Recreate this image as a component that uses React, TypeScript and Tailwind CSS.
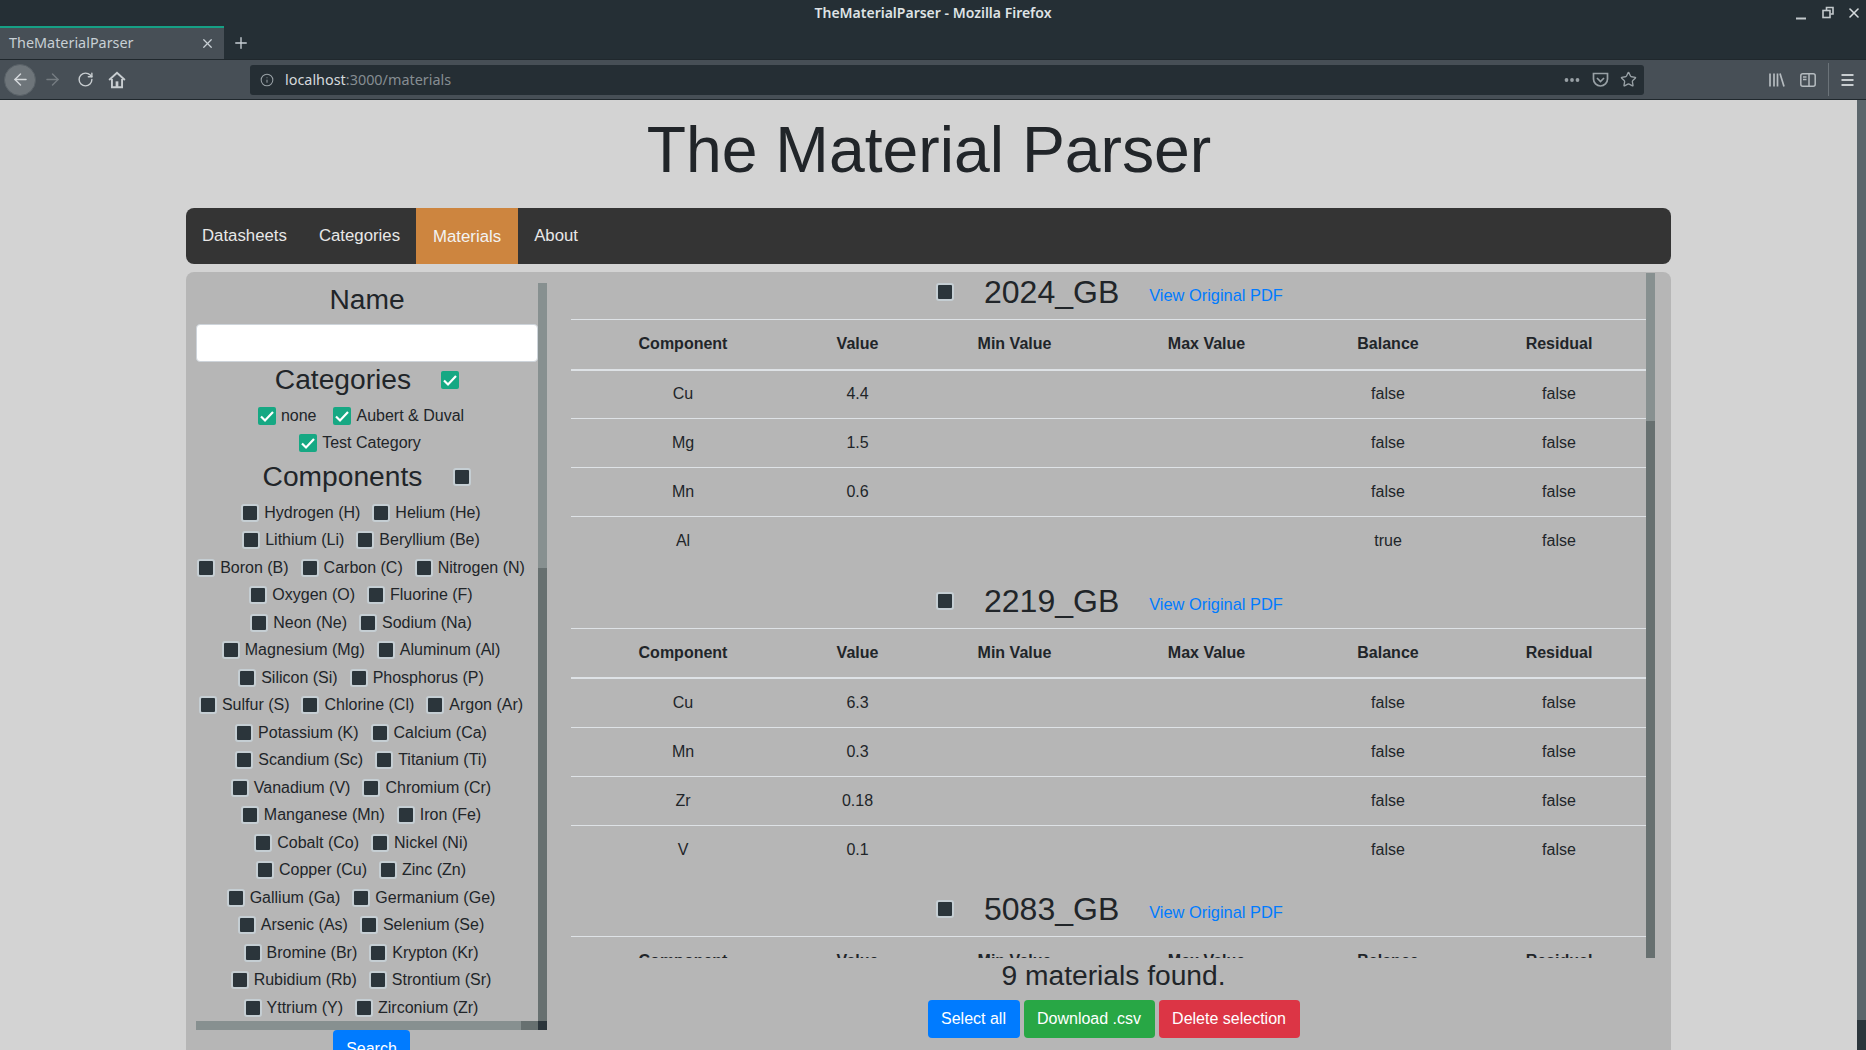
import { Info, Star, X, Plus, ArrowLeft, ArrowRight, RotateCw } from 'lucide-react'

const sans = { fontFamily: '"Liberation Sans", Arial, sans-serif' }

const elementRows = [
  ['Hydrogen (H)', 'Helium (He)'],
  ['Lithium (Li)', 'Beryllium (Be)'],
  ['Boron (B)', 'Carbon (C)', 'Nitrogen (N)'],
  ['Oxygen (O)', 'Fluorine (F)'],
  ['Neon (Ne)', 'Sodium (Na)'],
  ['Magnesium (Mg)', 'Aluminum (Al)'],
  ['Silicon (Si)', 'Phosphorus (P)'],
  ['Sulfur (S)', 'Chlorine (Cl)', 'Argon (Ar)'],
  ['Potassium (K)', 'Calcium (Ca)'],
  ['Scandium (Sc)', 'Titanium (Ti)'],
  ['Vanadium (V)', 'Chromium (Cr)'],
  ['Manganese (Mn)', 'Iron (Fe)'],
  ['Cobalt (Co)', 'Nickel (Ni)'],
  ['Copper (Cu)', 'Zinc (Zn)'],
  ['Gallium (Ga)', 'Germanium (Ge)'],
  ['Arsenic (As)', 'Selenium (Se)'],
  ['Bromine (Br)', 'Krypton (Kr)'],
  ['Rubidium (Rb)', 'Strontium (Sr)'],
  ['Yttrium (Y)', 'Zirconium (Zr)'],
]

const materials = [
  {
    name: '2024_GB',
    rows: [
      ['Cu', '4.4', 'false'],
      ['Mg', '1.5', 'false'],
      ['Mn', '0.6', 'false'],
      ['Al', '', 'true'],
    ],
  },
  {
    name: '2219_GB',
    rows: [
      ['Cu', '6.3', 'false'],
      ['Mn', '0.3', 'false'],
      ['Zr', '0.18', 'false'],
      ['V', '0.1', 'false'],
    ],
  },
  { name: '5083_GB', rows: [['Mg', '4.5', 'false']] },
]

function Checkbox({ checked }: { checked?: boolean }) {
  if (checked) {
    return (
      <span className="flex h-[18px] w-[18px] shrink-0 items-center justify-center rounded-[2px] bg-[#16a883]">
        <svg width="18" height="18" viewBox="0 0 18 18" fill="none">
          <path d="M3 9.5 L7 13.5 L15 5" stroke="white" strokeWidth="2.2" />
        </svg>
      </span>
    )
  }
  return <span className="h-[18px] w-[18px] shrink-0 rounded-[3px] border-2 border-[#c5ced3] bg-[#2b353b]" />
}

function CheckItem({ label, checked }: { label: string; checked?: boolean }) {
  return (
    <div className={checked ? 'mr-[17px] flex items-center gap-[5px]' : 'mr-[12px] flex items-center gap-[5px]'}>
      <Checkbox checked={checked} />
      <span>{label}</span>
    </div>
  )
}

function TitleBar() {
  return (
    <div className="relative flex h-[26px] items-center justify-center bg-[#252f35] pb-[2px]">
      <span className="text-[14px] font-semibold text-[#dfe3e5]">TheMaterialParser - Mozilla Firefox</span>
      <div className="absolute top-0 right-[4px] flex h-[26px] items-center gap-[10px]">
        <svg width="16" height="16" viewBox="0 0 16 16" className="text-[#c3c9cc]">
          <path d="M2 13.5 H12" stroke="currentColor" strokeWidth="2" />
        </svg>
        <svg width="16" height="16" viewBox="0 0 16 16" fill="none" stroke="currentColor" strokeWidth="1.6" className="text-[#c3c9cc]">
          <path d="M6.5 5 V2.5 H13 V9 H10.5" />
          <rect x="3" y="5.5" width="7" height="7" />
        </svg>
        <X size={16} strokeWidth={2.4} className="text-[#d5dadc]" />
      </div>
    </div>
  )
}

function TabBar() {
  return (
    <div className="flex h-[33px] items-stretch bg-[#252f35]">
      <div className="flex w-[224px] items-center justify-between border-t-[2px] border-[#16a085] bg-[#474f56] pr-[9px] pb-[1px] pl-[9px]">
        <span className="text-[14.4px] text-[#c8d0d5]">TheMaterialParser</span>
        <X size={15} strokeWidth={2} className="text-[#c8d0d5]" />
      </div>
      <div className="flex w-[34px] items-center justify-center">
        <Plus size={18} strokeWidth={1.8} className="text-[#c8d0d5]" />
      </div>
    </div>
  )
}

function Toolbar() {
  return (
    <div className="flex h-[41px] items-center border-t border-b border-[#20282d] bg-[#474f56]">
      <div className="ml-[4px] flex h-[32px] w-[32px] shrink-0 items-center justify-center rounded-full border border-[#596167] bg-[#6e757a]">
        <ArrowLeft size={19} strokeWidth={1.8} className="text-[#d5d9dc]" />
      </div>
      <ArrowRight size={19} strokeWidth={1.8} className="ml-[7px] shrink-0 text-[#757c81]" />
      <RotateCw size={17} strokeWidth={2} className="ml-[15px] shrink-0 text-[#c8cdd0]" />
      <svg width="18" height="18" viewBox="0 0 16 16" fill="none" stroke="#c8cdd0" strokeWidth="1.7" className="ml-[14px] shrink-0">
        <path d="M1 8 L8 1.5 L15 8" />
        <path d="M3.5 7 V14.5 H12.5 V7" />
        <rect x="6.8" y="9.2" width="2.4" height="5" fill="#c8cdd0" stroke="none" />
      </svg>
      <div className="ml-[124px] flex h-[30px] w-[1394px] shrink-0 items-center rounded-[3px] bg-[#252e34]">
        <Info size={14} strokeWidth={1.8} className="ml-[10px] text-[#98a0a5]" />
        <span className="ml-[11px] text-[14.4px] text-[#d5d9dc]">localhost</span>
        <span className="text-[14.4px] text-[#868d92]">:3000/materials</span>
        <div className="ml-auto flex items-center">
          <svg width="16" height="6" viewBox="0 0 16 6" fill="#98a0a5">
            <circle cx="2.5" cy="3" r="1.9" />
            <circle cx="8" cy="3" r="1.9" />
            <circle cx="13.5" cy="3" r="1.9" />
          </svg>
          <svg width="17" height="16" viewBox="0 0 17 16" fill="none" stroke="#98a0a5" strokeWidth="1.7" className="ml-[12px]">
            <path d="M1.5 1.5 H15.5 V7 A7 7 0 0 1 1.5 7 Z" />
            <path d="M5 6 L8.5 9.5 L12 6" />
          </svg>
          <Star size={17} strokeWidth={1.9} className="mr-[7px] ml-[11px] text-[#98a0a5]" />
        </div>
      </div>
      <div className="ml-[125px] flex shrink-0 items-center">
        <svg width="16" height="14" viewBox="0 0 16 14" fill="none" stroke="#b5bbbf" strokeWidth="1.7">
          <path d="M1 0.5 V13.5 M5 0.5 V13.5 M8.5 0.5 V13.5 M11 0.5 L15 13.5" />
        </svg>
        <svg width="16" height="14" viewBox="0 0 16 14" fill="none" stroke="#b5bbbf" strokeWidth="1.5" className="ml-[15px]">
          <rect x="0.8" y="0.8" width="14.4" height="12.4" rx="2" />
          <path d="M9 0.8 V13.2 M3 4 H6.5 M3 6.5 H6.5" />
        </svg>
        <div className="mr-[12px] ml-[12px] h-[33px] w-px bg-[#6b7379]" />
        <svg width="13" height="12" viewBox="0 0 13 12" stroke="#c8cdd0" strokeWidth="1.8">
          <path d="M0.5 1 H12.5 M0.5 6 H12.5 M0.5 11 H12.5" />
        </svg>
      </div>
    </div>
  )
}

function Navbar() {
  return (
    <nav className="flex h-[56px] items-stretch rounded-[8px] bg-[#343434] text-[16.8px] text-[#e8e8e8]">
      <span className="flex items-center px-[16px]">Datasheets</span>
      <span className="flex items-center px-[16px]">Categories</span>
      <span className="flex items-center bg-[#cd853f] px-[17px] pt-[1px] text-[#f3f3f3]">Materials</span>
      <span className="flex items-center px-[16px]">About</span>
    </nav>
  )
}

function Sidebar() {
  return (
    <div className="flex w-[351px] flex-col">
      <div className="flex h-[747px] overflow-hidden">
        <div className="flex w-[342px] flex-col text-[16px] text-[#212529]">
          <div className="mb-[8px] h-[33px] text-center text-[28.2px] leading-[32px]">Name</div>
          <div className="h-[38px] rounded-[4px] border border-[#ced4da] bg-white" />
          <div className="flex h-[36px] items-center justify-center gap-[30px]">
            <span className="-mt-[2px] text-[28.2px]">Categories</span>
            <Checkbox checked />
          </div>
          <div className="mt-[4px] flex h-[27.5px] items-center justify-center pl-[5px]">
            <CheckItem label="none" checked />
            <CheckItem label="Aubert & Duval" checked />
          </div>
          <div className="flex h-[27.5px] items-center justify-center pl-[3px]">
            <CheckItem label="Test Category" checked />
          </div>
          <div className="mt-[2px] flex h-[36px] items-center justify-center gap-[31px]">
            <span className="-mt-[2px] text-[28.2px]">Components</span>
            <Checkbox />
          </div>
          <div className="mt-[4px] flex flex-col">
            {elementRows.map((row) => (
              <div key={row[0]} className="flex h-[27.5px] items-center justify-center whitespace-nowrap">
                {row.map((el) => (
                  <CheckItem key={el} label={el} />
                ))}
              </div>
            ))}
          </div>
        </div>
        <div className="flex w-[9px] flex-col">
          <div className="h-[285px] bg-[#879090]" />
          <div className="flex-1 bg-[#677070]" />
        </div>
      </div>
      <div className="-mt-[9px] flex h-[9px]">
        <div className="w-[325px] bg-[#879090]" />
        <div className="w-[17px] bg-[#677070]" />
        <div className="w-[9px] bg-[#2b353b]" />
      </div>
      <div className="flex justify-center">
        <button className="h-[38px] w-[77px] rounded-[4px] bg-[#007bff] text-[16px] text-white">Search</button>
      </div>
    </div>
  )
}

function MaterialBlock({ name, rows }: { name: string; rows: string[][] }) {
  return (
    <div className="mb-[16px]">
      <div className="flex h-[46px] items-start">
        <div className="ml-[365px] flex h-[38px] items-center">
          <Checkbox />
        </div>
        <span className="ml-[30px] text-[32px] leading-[38px]">{name}</span>
        <a className="mt-[10px] ml-[30px] text-[16.4px] leading-[24px] text-[#007bff]">View Original PDF</a>
      </div>
      <table className="w-[1075px] table-fixed text-center text-[16px]">
        <colgroup>
          <col className="w-[221px]" />
          <col className="w-[128px]" />
          <col className="w-[186px]" />
          <col className="w-[198px]" />
          <col className="w-[165px]" />
          <col className="w-[177px]" />
        </colgroup>
        <thead>
          <tr className="h-[50px] border-t border-b-2 border-[#dee2e6]">
            {['Component', 'Value', 'Min Value', 'Max Value', 'Balance', 'Residual'].map((h) => (
              <th key={h} className="pl-[3px] font-bold">{h}</th>
            ))}
          </tr>
        </thead>
        <tbody>
          {rows.map((r) => (
            <tr key={r[0]} className="h-[49px] border-t border-[#dee2e6] first:border-t-0">
              <td className="pl-[3px]">{r[0]}</td>
              <td className="pl-[3px]">{r[1]}</td>
              <td />
              <td />
              <td className="pl-[3px]">{r[2]}</td>
              <td className="pl-[3px]">false</td>
            </tr>
          ))}
        </tbody>
      </table>
    </div>
  )
}

function Results() {
  return (
    <div className="flex w-[1100px] flex-col text-[#212529]">
      <div className="flex h-[685px]">
        <div className="ml-[15px] h-full w-[1075px] overflow-hidden">
          {materials.map((m) => (
            <MaterialBlock key={m.name} name={m.name} rows={m.rows} />
          ))}
        </div>
        <div className="flex w-[9px] flex-col">
          <div className="h-[148px] bg-[#879090]" />
          <div className="flex-1 bg-[#677070]" />
        </div>
      </div>
      <div className="mr-[-15px] flex flex-col items-center">
        <div className="h-[42px] text-[28.2px] leading-[34px]">9 materials found.</div>
        <div className="flex gap-[4px] text-[16px] text-white">
          <button className="h-[38px] w-[92px] rounded-[4px] bg-[#007bff]">Select all</button>
          <button className="h-[38px] w-[131px] rounded-[4px] bg-[#28a745]">Download .csv</button>
          <button className="h-[38px] w-[141px] rounded-[4px] bg-[#dc3545]">Delete selection</button>
        </div>
      </div>
    </div>
  )
}

export default function App() {
  return (
    <div className="flex h-[1050px] w-[1866px] flex-col overflow-hidden" style={{ fontFamily: '"Noto Sans", sans-serif' }}>
      <TitleBar />
      <TabBar />
      <Toolbar />
      <div className="flex min-h-0 flex-1 bg-[#d3d3d3]" style={sans}>
        <main className="flex-1">
          <div className="mx-auto w-[1485px]">
            <h1 className="flex h-[108px] items-center justify-center pb-[8px] pl-[1px] text-[64.3px] text-[#212529]">The Material Parser</h1>
            <Navbar />
            <div className="mt-[8px] flex h-[800px] rounded-[8px] bg-[#b6b6b6] pt-[1px] pl-[10px]">
              <div className="mt-[10px]">
                <Sidebar />
              </div>
              <div className="ml-[9px]">
                <Results />
              </div>
            </div>
          </div>
        </main>
        <div className="flex w-[9px] flex-col">
          <div className="h-[920px] bg-[#5b656b]" />
          <div className="flex-1 bg-[#2b353b]" />
        </div>
      </div>
    </div>
  )
}
